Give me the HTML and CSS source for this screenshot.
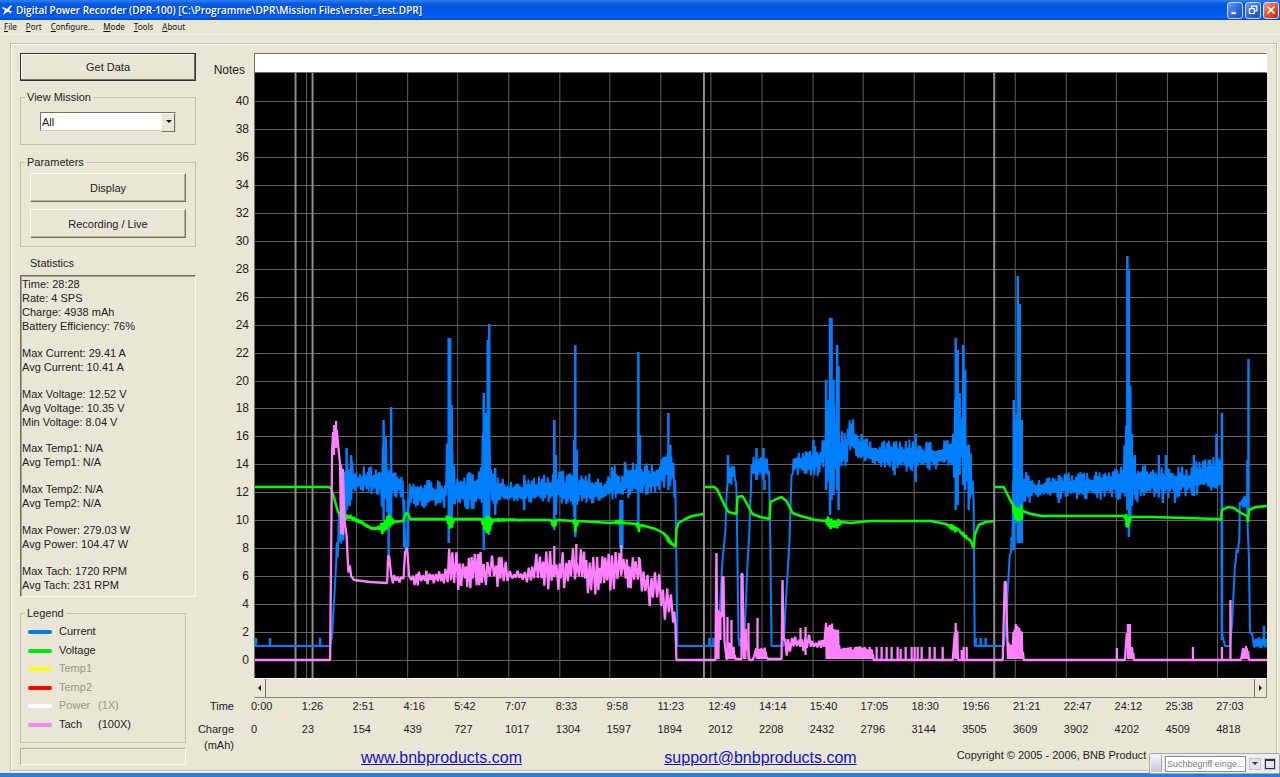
FILE: index.html
```html
<!DOCTYPE html>
<html lang="en">
<head>
    <meta charset="UTF-8">
    <meta name="viewport" content="width=device-width, initial-scale=1.0">
    <title>Digital Power Recorder (DPR-100)</title>
    <link rel="stylesheet" href="styles.css">
</head>
<body>
    <header class="titlebar">
        <svg class="app-icon" viewBox="0 0 12 12"><path d="M1 3l4 2 4-4 1 1-3 4 1 1 3 0-2 1 0 2-2-2-2 0-4 3 2-5-3-2z"/></svg>
        <h1>Digital Power Recorder (DPR-100) [C:\Programme\DPR\Mission Files\erster_test.DPR]</h1>
        <div class="window-buttons">
            <button aria-label="Minimize"><svg viewBox="0 0 16 16"><path d="M4 11.500h5" stroke-width="2.500"/></svg></button>
            <button aria-label="Restore"><svg viewBox="0 0 16 16"><path d="M6.500 6V3.500h6v5.500H10M4 6.500h5.500V12H4z" stroke-width="1.400"/></svg></button>
            <button class="close" aria-label="Close"><svg viewBox="0 0 16 16"><path d="M4 4l8 8M12 4l-8 8" stroke-width="2"/></svg></button>
        </div>
    </header>
    <nav class="menu">
        <a href="#"><u>F</u>ile</a>
        <a href="#"><u>P</u>ort</a>
        <a href="#"><u>C</u>onfigure...</a>
        <a href="#"><u>M</u>ode</a>
        <a href="#"><u>T</u>ools</a>
        <a href="#"><u>A</u>bout</a>
    </nav>

    <main class="panel">
        <aside class="sidebar">
            <button class="btn default">Get Data</button>
            <fieldset class="mission">
                <legend><label for="mission">View Mission</label></legend>
                <div class="select">
                    <select id="mission"><option>All</option></select>
                </div>
            </fieldset>
            <fieldset class="params">
                <legend>Parameters</legend>
                <button class="btn">Display</button>
                <button class="btn">Recording / Live</button>
            </fieldset>
            <h2>Statistics</h2>
            <div class="stats">
                <p>Time: 28:28</p>
                <p>Rate: 4 SPS</p>
                <p>Charge: 4938 mAh</p>
                <p>Battery Efficiency: 76%</p>
                <p></p>
                <p>Max Current: 29.41 A</p>
                <p>Avg Current: 10.41 A</p>
                <p></p>
                <p>Max Voltage: 12.52 V</p>
                <p>Avg Voltage: 10.35 V</p>
                <p>Min Voltage: 8.04 V</p>
                <p></p>
                <p>Max Temp1: N/A</p>
                <p>Avg Temp1: N/A</p>
                <p></p>
                <p>Max Temp2: N/A</p>
                <p>Avg Temp2: N/A</p>
                <p></p>
                <p>Max Power: 279.03 W</p>
                <p>Avg Power: 104.47 W</p>
                <p></p>
                <p>Max Tach: 1720 RPM</p>
                <p>Avg Tach: 231 RPM</p>
            </div>
            <fieldset class="legend">
                <legend>Legend</legend>
                <ul>
                    <li><i class="current"></i><span>Current</span></li>
                    <li><i class="voltage"></i><span>Voltage</span></li>
                    <li class="off"><i class="temp1"></i><span>Temp1</span></li>
                    <li class="off"><i class="temp2"></i><span>Temp2</span></li>
                    <li class="off"><i class="power"></i><span>Power</span><span>(1X)</span></li>
                    <li><i class="tach"></i><span>Tach</span><span>(100X)</span></li>
                </ul>
            </fieldset>
            <div class="statusbox"></div>
        </aside>

        <section class="recorder">
            <label class="notes-label" for="notes">Notes</label>
            <input class="notes" id="notes" type="text">
            <div class="y-axis" id="yAxis"></div>
            <svg class="plot" id="plot" viewBox="255 73 1011 605" preserveAspectRatio="none"></svg>
            <div class="scrollbar">
                <button class="left" aria-label="Scroll left"></button>
                <button class="right" aria-label="Scroll right"></button>
            </div>
            <div class="axis-name">Time</div>
            <div class="x-axis" id="timeAxis"></div>
            <div class="axis-name charge">Charge<br>(mAh)</div>
            <div class="x-axis" id="chargeAxis"></div>
            <footer class="links">
                <a href="#">www.bnbproducts.com</a>
                <a href="#">support@bnbproducts.com</a>
                <span>Copyright © 2005 - 2006, BNB Product</span>
            </footer>
        </section>
    </main>

    <div class="deskbar">
        <span class="grip"></span>
        <input type="text" value="Suchbegriff einge..." aria-label="Suchbegriff">
        <button class="drop" aria-label="Suchoptionen"></button>
        <button class="win" aria-label="Fenster"></button>
    </div>
    <script src="chart.js"></script>
</body>
</html>
```

FILE: styles.css
```css
* {
    box-sizing: border-box;
}
body {
    margin: 0;
    min-height: 100vh;
    display: flex;
    flex-direction: column;
    background-color: #eae6d6;
    border-bottom: 4px solid #2a7ce0;
    color: #222;
    font-family: "Liberation Sans", Arial, sans-serif;
    font-size: 11px;
    line-height: 14px;
}
h1, h2, p, ul {
    margin: 0;
    padding: 0;
}
button, input, select {
    font: inherit;
    color: inherit;
}

/* title bar */
.titlebar {
    display: flex;
    align-items: center;
    height: 20px;
    padding: 0 1px 0 2px;
    background: linear-gradient(#2b82f5, #0a58dc 20%, #0458e6 55%, #0560fa 85%, #0344c0);
    color: #fff;
}
.titlebar h1 {
    flex: 1;
    margin-left: 2px;
    font-family: "Open Sans", "Noto Sans", sans-serif;
    font-size: 10px;
    font-weight: 600;
    text-shadow: 1px 1px 0 #0a3a9a;
}
.app-icon {
    width: 12px;
    height: 12px;
    fill: #fff;
}
.window-buttons {
    display: flex;
    gap: 2px;
}
.window-buttons button {
    width: 16px;
    height: 17px;
    padding: 0;
    border: 1px solid #c8dcff;
    border-radius: 3px;
    background: linear-gradient(135deg, #6a9cf8, #2a62dc 60%, #1c4cc0);
}
.window-buttons .close {
    background: linear-gradient(135deg, #f09878, #dc4a22 60%, #b83410);
}
.window-buttons svg {
    display: block;
    fill: none;
    stroke: #fff;
}

/* menu */
.menu {
    display: flex;
    gap: 9px;
    height: 15px;
    padding-left: 4px;
    font-family: "Noto Sans", sans-serif;
    font-size: 8px;
    border-bottom: 1px solid #f4f1e8;
}
.menu a {
    color: #111;
    text-decoration: none;
}

.panel {
    flex: 1;
    display: grid;
    grid-template-columns: 176px 1fr;
    margin: 8px 3px 2px 10px;
    padding: 9px 9px 0 9px;
    border: 1px solid #c2beae;
    box-shadow: inset 1px 1px 0 #fbf9f0, 1px 1px 0 #fbf9f0;
}

/* sidebar */
.btn {
    display: block;
    width: 100%;
    height: 29px;
    padding: 0;
    border: 1px solid;
    border-color: #fbf9f0 #77725f #77725f #fbf9f0;
    box-shadow: inset -1px -1px 0 #b5b09e;
    background-color: #eae6d6;
}
.btn.default {
    height: 28px;
    border: 1px solid #333;
    box-shadow: inset -1px -1px 0 #77725f, inset 1px 1px 0 #fbf9f0;
}
fieldset {
    margin: 0;
    padding: 0 9px;
    border: 1px solid #c2beae;
}
fieldset legend {
    margin-left: -5px;
    padding: 0 2px;
}
.mission {
    height: 55px;
    margin-top: 9px;
}
.select {
    position: relative;
    width: 136px;
    margin: 8px 0 0 10px;
}
.select select {
    display: block;
    width: 100%;
    height: 19px;
    padding: 0 1px;
    border: 1px solid;
    border-color: #77725f #d5d1c0 #d5d1c0 #77725f;
    border-radius: 0;
    background-color: #fff;
    appearance: none;
}
.select::after {
    content: "";
    position: absolute;
    top: 1px;
    right: 1px;
    width: 12px;
    height: 17px;
    border: 1px solid;
    border-color: #fbf9f0 #77725f #77725f #fbf9f0;
    background-color: #eae6d6;
    pointer-events: none;
}
.select::before {
    content: "";
    position: absolute;
    z-index: 1;
    top: 8px;
    right: 4px;
    border: 3px solid transparent;
    border-top-color: #111;
    border-bottom: 0;
    pointer-events: none;
}
.params {
    height: 92px;
    margin-top: 10px;
}
.params .btn {
    margin-top: 4px;
}
.params .btn + .btn {
    margin-top: 7px;
}
.sidebar h2 {
    margin: 9px 0 5px 10px;
    font-size: 11px;
    font-weight: normal;
}
.stats {
    display: grid;
    grid-auto-rows: 1fr;
    height: 322px;
    padding: 1px 1px 4px;
    border: 1px solid;
    border-color: #77725f #fbf9f0 #fbf9f0 #77725f;
    box-shadow: inset 1px 1px 0 #a8a493;
}
.legend {
    width: 166px;
    height: 137px;
    margin-top: 9px;
    padding: 0 7px;
}
.legend legend {
    margin-left: -3px;
}
.legend ul {
    display: grid;
    grid-auto-rows: 1fr;
    align-items: center;
    height: 111px;
    margin-top: 2px;
    list-style: none;
}
.legend li {
    display: grid;
    grid-template-columns: 31px 39px 1fr;
    align-items: center;
}
.legend i {
    width: 24px;
    height: 4px;
    margin-top: 2px;
    border-radius: 2px;
}
.legend .off {
    color: #999586;
}
.current { background-color: #0a7ae6; }
.voltage { background-color: #08e61a; }
.temp1 { background-color: #fafa14; }
.temp2 { background-color: #ee0808; }
.power { background-color: #fffef8; }
.tach { background-color: #f883f4; }
.statusbox {
    width: 166px;
    height: 17px;
    margin-top: 5px;
    border: 1px solid;
    border-color: #b5b09e #fbf9f0 #fbf9f0 #b5b09e;
}

/* recorder */
.recorder {
    display: grid;
    grid-template-columns: 58px 1fr;
    grid-template-rows: 20px 1fr 20px 18px 33px 21px;
}
.notes-label {
    padding: 10px 9px 0 0;
    text-align: right;
    font-size: 12px;
}
.notes {
    width: 100%;
    padding: 0 3px;
    border: 1px solid #77725f;
    border-right-color: #fff;
    border-radius: 0;
    background-color: #fff;
}
.y-axis {
    display: flex;
    flex-direction: column;
    padding: 14px 5px 4px 0;
    text-align: right;
    font-size: 12px;
}
.y-axis span {
    flex: 1;
    display: flex;
    align-items: center;
    justify-content: flex-end;
}
.plot {
    width: 100%;
    height: 100%;
    min-height: 0;
    background-color: #000;
    border-left: 1px solid #77725f;
    contain: size;
}
.scrollbar {
    grid-column: 2;
    display: flex;
    justify-content: space-between;
    border-top: 1px solid #fff;
    border-bottom: 1px solid #8b8778;
    border-right: 1px solid #8b8778;
}
.scrollbar button {
    display: flex;
    align-items: center;
    justify-content: center;
    width: 12px;
    padding: 0;
    border: 0 solid #77725f;
    background: none;
}
.scrollbar .left {
    border-right-width: 1px;
}
.scrollbar .right {
    border-left-width: 1px;
}
.scrollbar button::before {
    content: "";
    border: 3px solid transparent;
}
.scrollbar .left::before {
    border-right-color: #111;
    border-left: 0;
}
.scrollbar .right::before {
    border-left-color: #111;
    border-right: 0;
}
.axis-name {
    padding: 1px 20px 0 0;
    text-align: right;
}
.axis-name.charge {
    padding-top: 5px;
    line-height: 16px;
}
.x-axis {
    display: grid;
    grid-template-columns: repeat(20, 1fr);
    margin-left: -3px;
    padding-top: 1px;
}
#chargeAxis {
    padding-top: 6px;
}
.links {
    grid-column: 1 / -1;
    display: grid;
    grid-template-columns: 303fr 292fr 310fr;
    padding-left: 165px;
    line-height: 18px;
}
.links a {
    color: #1010cc;
    font-size: 16px;
}
.links span {
    line-height: 12px;
}

/* search toolbar over the corner of the window */
.deskbar {
    position: absolute;
    right: 0;
    bottom: 3px;
    display: flex;
    align-items: center;
    gap: 3px;
    width: 131px;
    height: 21px;
    padding: 1px 3px 1px 1px;
    border: 1px solid #a9a9b0;
    border-radius: 2px;
    background-color: #eeedf0;
}
.deskbar .grip {
    width: 11px;
    height: 17px;
    border-right: 1px solid #a9a9b0;
    background: linear-gradient(#f4f4f6, #c9c9d0);
}
.deskbar input {
    flex: 1;
    min-width: 0;
    height: 16px;
    padding: 0 1px;
    border: 1px solid #8a8a92;
    background-color: #fff;
    color: #777;
    font-size: 9px;
}
.deskbar button {
    display: flex;
    align-items: center;
    justify-content: center;
    width: 12px;
    height: 12px;
    padding: 0;
    border: 1px solid #c4c4cc;
    background-color: #e2e2e8;
}
.drop::before {
    content: "";
    border: 3px solid transparent;
    border-top-color: #333;
    border-bottom: 0;
}
.win::before {
    content: "";
    width: 8px;
    height: 7px;
    border: 1px solid #333;
    border-top-width: 2px;
}
```

FILE: chart.js
```javascript
const times = ["0:00", "1:26", "2:51", "4:16", "5:42", "7:07", "8:33", "9:58", "11:23", "12:49",
    "14:14", "15:40", "17:05", "18:30", "19:56", "21:21", "22:47", "24:12", "25:38", "27:03"];
const charges = [0, 23, 154, 439, 727, 1017, 1304, 1597, 1894, 2012,
    2208, 2432, 2796, 3144, 3505, 3609, 3902, 4202, 4509, 4818];

// envelopes: [x, top, bottom]; a point without bottom is a clean line
const current = [[
    [255,646],[330,646],[332,636],[334,600],[336,565],[338,505,555],[343,505,556],[344,460,540],[346,460,510],
    [352,460,508],[354,473,492],[360,474,490],[364,467,493],[381,468,494],[382,440,515],[386,440,518],
    [388,475,525],[392,465,500],[394,472,496],[402,475,500],[404,490,520],[405,548],[407,548],[408,482,505],
    [445,480,510],[447,440,508],[453,440,508],[455,476,508],[480,472,508],[482,414,512],[489,414,512],[491,470,508],
    [498,478,505],[515,484,502],[550,474,504],[560,472,504],[590,475,504],[606,480,502],[610,467,500],[617,466,498],
    [620,483,500],[624,464,500],[640,462,494],[655,467,492],[662,455,488],[666,450,485],[672,445,488],
    [674,460,500],[675,490],[676,560],[677,646],[714,646],[718,640],[719,617],[722,560],[725,530],[727,465,480],[728,460,484],
    [734,461,484],[736,490],[737,560],[738,640],[744,640],[745,612],[747,565],[749,530],[751,462,475],[753,456,478],
    [765,452,480],[769,470,480],[770,560],[771,646],[783,646],[785,608],[789,540],[791,475],[792,455,476],
    [800,452,474],[818,446,476],[824,438,466],[826,400,480],[837,410,480],[839,432,472],[846,430,465],[849,418,450],
    [853,418,448],[857,437,462],[868,440,464],[880,442,468],[915,440,472],[935,443,470],[952,438,464],[954,400,480],
    [958,425,470],[964,410,480],[967,440,490],[970,455,505],[972,470,510],[973,500],[974,646],[1003,646],[1005,630],
    [1007,590],[1009,555],[1011,530,550],[1013,440,550],[1016,380,543],[1021,420,543],[1022,470,500],[1028,475,503],
    [1032,480,498],[1042,480,498],[1048,476,500],[1070,473,498],[1100,472,500],[1110,470,497],[1122,465,502],
    [1124,420,505],[1130,420,505],[1134,460,502],[1140,466,498],[1165,468,498],[1190,468,496],[1195,462,494],
    [1217,456,488],[1221,455,488],[1221,634],[1224,646],[1229,646],[1231,625],[1234,565],[1236,545,556],[1238,545,556],
    [1239,502],[1241,498,510],[1246,495,510],[1248,560],[1249,633],[1251,633],[1252,637,648],[1266,637,648]
]];
const currentSpikes = [
    [256,638,646],[270,638,646],[320,638,646],[346.5,448,510],[351,455,500],[383.5,420,520],[388.5,470,555],[391,407,520],
    [404,500,547],[408,500,547],[448.5,338,543],[450,338,520],[451.5,405,520],[483.5,393,550],[485,413,520],[487.5,340,530],
    [489,324,535],[495,468,515],[524,475,510],[554,420,530],[555.5,455,515],[575,345,537],[574,440,517],[576.5,450,505],
    [620,500,549],[622,500,549],[624.5,462,490],[638,352,525],[639.5,435,490],[668,413,490],[670,445,480],
    [709,638,646],[713,638,646],[727.5,455,480],[739,638,646],[756,448,480],[763,448,480],[764,480,490],[813,440,470],
    [825.5,380,490],[829.5,318,515],[831,318,500],[833,380,495],[836.5,345,490],[838,366,510],[861,434,455],[894,455,475],
    [915,434,482],[955,338,510],[957,350,505],[959,393,475],[962.5,345,485],[964.5,370,490],[968,445,510],[975,638,646],
    [980,638,646],[985,638,646],[1013,400,550],[1017,276,543],[1019,304,543],[1021,420,543],[1058,475,503],
    [1126.5,256,510],[1128,270,537],[1129.5,386,520],[1131,434,505],[1134,455,495],[1158,455,480],[1165,455,480],
    [1162,480,503],[1174,480,503],[1193,455,496],[1215.5,434,480],[1221,413,640],[1247.5,359,510],[1246.5,460,510],[1263,626,646]
];
const voltage = [[
    [255,487],[328,487],[331,488],[334,498],[338,512],[342,514,521],[350,515,520],[360,520,524],[372,527,530],
    [380,526,530],[382,519,534],[386,519,532],[388,514,526],[391,513,528],[394,522],[403,521],[406,513],[408,514],
    [410,519],[446,519],[447,515,522],[449,515,535],[452,517,528],[454,519],[481,519],[483,516,528],[489,516,536],
    [492,518,522],[550,520],[554,518,530],[557,520],[573,521],[575,517,532],[578,521],[610,523],[620,519,525],
    [625,523],[636,524],[638,522,535],[641,525],[655,529],[663,533],[668,536,543],[675,547],[676,530],[678,523],
    [685,519],[692,516],[703,514]
], [
    [704,487],[714,487],[717,490],[724,505],[728,512],[736,514],[737,497],[742,496],[746,503],[752,514],[760,517],
    [769,519],[770,502],[776,499],[781,497],[786,501],[792,513],[800,516],[815,520],[825,521],[827,517,528],
    [831,517,531],[838,518,528],[841,522],[850,523],[870,521],[930,521],[945,524],[954,524,534],[957,529],
    [963,532,538],[970,541],[973,548],[974,535],[978,525],[985,522],[993,521]
], [
    [994,487],[1003,487],[1007,495],[1011,503],[1013,503,515],[1016,505,526],[1020,505,526],[1022,511],[1030,514],
    [1042,515,517],[1068,516],[1123,516],[1126,514,528],[1128,514,530],[1130,517],[1150,517],[1217,519],[1220,520],
    [1221,510],[1227,507],[1233,508],[1240,513],[1246,516],[1247,522],[1248,510],[1255,507],[1266,506]
]];
const tach = [[
    [255,660],[330,660],[331,560],[332,450],[333,425,450],[337,421,452],[339,440,460],[340,452,490],[341,465,535],
    [343,470,530],[345,490,535],[346,525,560],[349,550,578],[351,576],[354,580],[370,582],[387,583],[388,556],
    [389,556],[390,576,583],[403,574,583],[405,552],[407,548],[409,576],[412,571,585],[445,570,584],[448,550,582],
    [452,552,592],[460,556,588],[480,553,586],[492,556,586],[508,560,590],[513,572,580],[525,570,580],[532,556,588],
    [552,552,590],[580,548,590],[600,556,594],[619,553,590],[621,549,582],[623,549,582],[625,560,588],[637,558,590],
    [642,562,602],[652,570,606],[658,572,612],[664,577,618],[670,580,622],[673,600,632],[675,625],[676,660],
    [715,660],[716,553],[717,659],[719,610,632],[721,612,632],[722,577],[723,577],[724,640],[726,659],[728,640,659],
    [733,645,659],[735,659],[741,659],[741,574],[742,574],[743,631,659],[746,626,659],[749,660],[752,660],
    [754,648,659],[765,647,659],[767,659],[781,659],[782,580],[783,640],[785,633,655],[788,634,655],[792,638,650],
    [800,635,652],[808,634,652],[816,641,648],[823,639,648],[825,622,659],[838,623,659],[839,648,659],[862,646,659],
    [866,648,659],[872,648,659],[873,660],[952,660],[953,647,659],[954,624,659],[957,628,659],[958,660],[1002,660],[1004,582],[1005,582],
    [1006,640,659],[1012,644,659],[1013,622,659],[1018,624,659],[1021,630,659],[1022,645,659],[1023,660],
    [1124,660],[1126,624,659],[1129,624,659],[1130,647,659],[1132,647,659],[1133,660],[1240,660],[1241,648,659],
    [1247,647,659],[1248,660],[1266,660]
]];
const tachSpikes = [
    [334,425,455],[336,421,448],[341,465,520],[343,470,535],[554,546,570],[576,544,570],[621,545,570],[638.5,557,575],
    [718,610,659],[720,612,640],[727,617,659],[731,620,659],[748,623,659],[757,618,659],
    [800,628,645],[805,627,655],[850,647,659],[859,647,659],[864,647,659],[869,647,659],[871,650,659],[876,647,659],
    [881,647,659],[886,647,659],[891,647,659],[897,647,659],[900,649,659],[905,647,659],[911,647,659],[914,647,659],
    [917,647,659],[921,647,659],[929,647,659],[934,647,659],[942,647,659],[955,623,659],[961,650,659],[963,647,659],
    [966,647,659],[1116,648,659],[1127,624,659],[1129,624,659],[1131,647,659],[1192,647,659],[1221,647,659],[1229.5,600,659],
    [1242,648,659],[1245,646,659]
];

let seed = 7;
function random() {
    seed = (seed * 16807) % 2147483647;
    return seed / 2147483647;
}

// fills the band between two envelope points with noise
function trace(points, step, core, peaks) {
    let d = "";
    let up = 1;
    let next = points[0][0] + step;
    for (let i = 0; i < points.length; i++) {
        const [x0, t0, b0 = t0] = points[i];
        const flat = t0 == b0;
        if (!i || flat) d += (i ? "L" : "M") + x0 + " " + t0;
        if (i == points.length - 1) break;
        const [x1, t1, b1 = t1] = points[i + 1];
        if (flat && t1 == b1) continue;
        // bands standing on the zero line are drawn solid
        const solid = b0 == 659 && b1 == 659;
        next = Math.max(next, x0);
        while (next < x1) {
            const k = (next - x0) / (x1 - x0);
            const top = t0 + (t1 - t0) * k;
            const bottom = b0 + (b1 - b0) * k;
            let size = random() < peaks ? 0.8 + random() * 0.3 : core * (0.6 + random() * 0.6);
            if (solid) size = up > 0 ? 1 : 0.5 + random() * 0.5;
            const y = (top + bottom) / 2 + up * size * (bottom - top) / 2;
            d += "L" + next.toFixed(1) + " " + y.toFixed(1);
            up = -up;
            next += solid ? 0.6 : step * (0.6 + random() * 0.8);
        }
    }
    return d;
}

function path(d, color, width) {
    return `<path d="${d}" fill="none" stroke="${color}" stroke-width="${width}" stroke-linejoin="bevel"/>`;
}

function spikes(list) {
    return list.map(([x, top, bottom]) => `M${x} ${top}V${bottom}`).join("");
}

function draw() {
    let svg = "";
    for (let v = 0; v <= 40; v += 2) {
        svg += path(`M255 ${Math.round(660 - v * 13.975) + 0.5}H1266`, "#606462", 1);
    }
    for (let i = 1; i < 20; i++) {
        svg += path(`M${Math.round(255 + i * 50.6) + 0.5} 73V678`, "#606462", 1);
    }
    for (const x of [295.5, 312.5, 703.5, 993.5]) {
        svg += path(`M${x} 73V678`, "#8e8e8e", 2);
    }
    svg += current.map(p => path(trace(p, 0.9, 0.6, 0.45), "#0080ff", 2)).join("");
    svg += path(spikes(currentSpikes), "#0080ff", 2.5);
    svg += voltage.map(p => path(trace(p, 0.8, 0.7, 0.4), "#00ff00", 2.5)).join("");
    svg += tach.map(p => path(trace(p, 1.7, 0.5, 0.4), "#ff80ff", 2.3)).join("");
    svg += path(spikes(tachSpikes), "#ff80ff", 2.3);
    document.getElementById("plot").innerHTML = svg;
}

function fill(id, labels) {
    document.getElementById(id).innerHTML = labels.map(t => `<span>${t}</span>`).join("");
}

fill("timeAxis", times);
fill("chargeAxis", charges);
fill("yAxis", Array.from({ length: 21 }, (_, i) => 40 - i * 2));
draw();
```
